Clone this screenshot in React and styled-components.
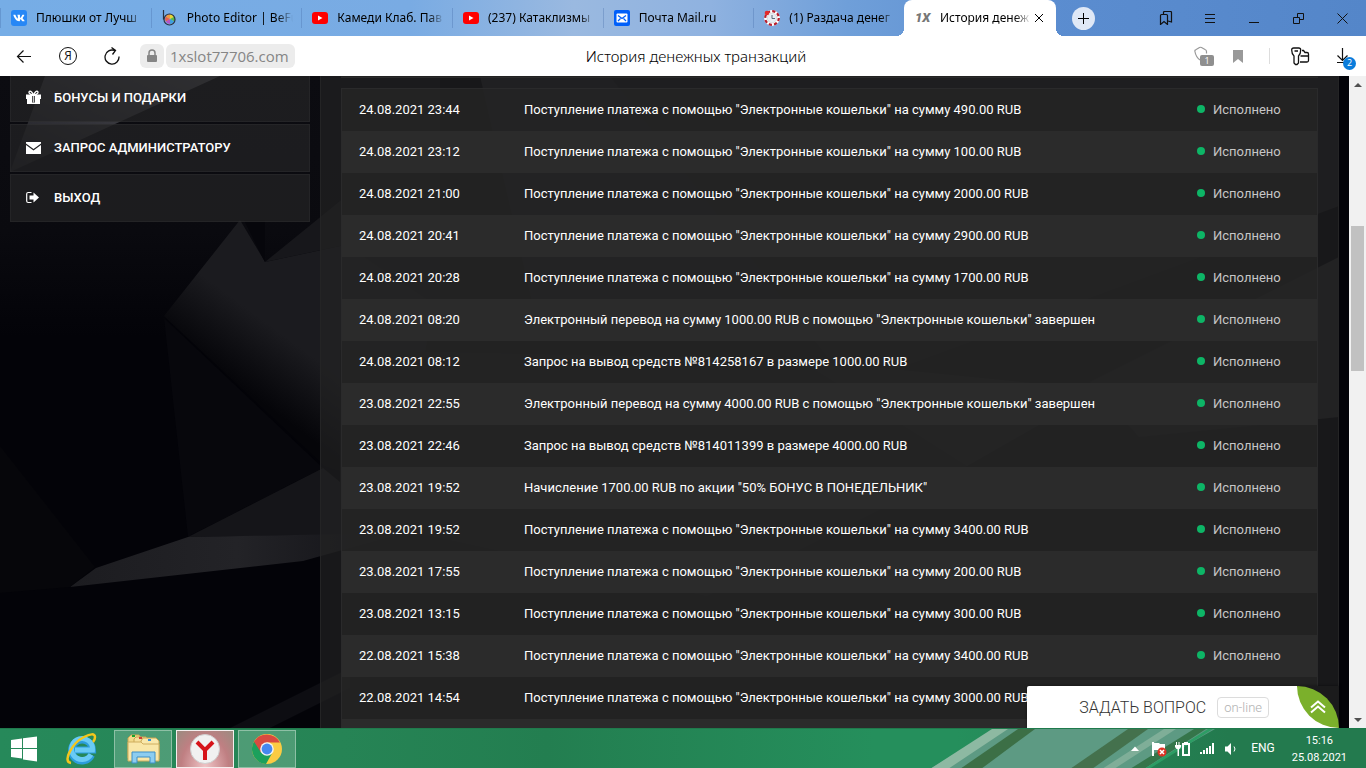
import React from "react";
import styled, { createGlobalStyle } from "styled-components";
import { FaVk } from "react-icons/fa";

const GlobalStyle = createGlobalStyle`
	* {
		box-sizing: border-box;
	}
	body {
		margin: 0;
		font-family: Roboto, "Liberation Sans", sans-serif;
		font-size: 13px;
		overflow: hidden;
	}
	button {
		border: none;
		background: none;
		padding: 0;
		font-family: inherit;
		color: inherit;
	}
	svg {
		display: block;
		flex: none;
	}
`;

const Screen = styled.div`
	display: flex;
	flex-direction: column;
	height: 100vh;
	background-color: #030308;
`;

/* browser tabs */

const TabBar = styled.header`
	display: flex;
	flex: none;
	height: 36px;
	background: linear-gradient(
		90deg,
		#76ade6 0%,
		#79abe3 30%,
		#9ab9e0 42%,
		#8fb2e0 52%,
		#6f9fd9 62%,
		#5b8dd0 76%,
		#5486c9 100%
	);
`;

const TabList = styled.nav`
	display: flex;
	flex: 0 1 904px;
	min-width: 0;
`;

const Tab = styled.button`
	display: flex;
	align-items: center;
	flex: 1 1 0;
	min-width: 0;
	gap: 9px;
	padding: 0 8px 0 11px;
	color: #000;
	background: linear-gradient(rgba(70, 110, 170, 0.35), rgba(70, 110, 170, 0.35)) 0 50% / 1px 20px no-repeat;
`;

const ActiveTab = styled.div`
	position: relative;
	display: flex;
	align-items: center;
	flex: none;
	width: 152px;
	gap: 9px;
	padding: 0 12px 0 11px;
	color: #000;
	background-color: #fff;
	border-radius: 8px 8px 0 0;
	&::before,
	&::after {
		content: "";
		position: absolute;
		bottom: 0;
		width: 8px;
		height: 8px;
	}
	&::before {
		right: 100%;
		background: radial-gradient(circle at 0 0, transparent 8px, #fff 8px);
	}
	&::after {
		left: 100%;
		background: radial-gradient(circle at 100% 0, transparent 8px, #fff 8px);
	}
	button {
		margin-left: -6px;
	}
`;

const TabText = styled.span`
	flex: 1;
	min-width: 0;
	overflow: hidden;
	white-space: nowrap;
	text-align: left;
	font: 12px/20px "Noto Sans", "Open Sans", sans-serif;
	mask-image: linear-gradient(90deg, #000 calc(100% - 16px), transparent);
`;

const VkLogo = styled.span`
	display: flex;
	flex: none;
	align-items: center;
	justify-content: center;
	width: 16px;
	height: 16px;
	border-radius: 3px;
	background-color: #2787f5;
	color: #fff;
	font-size: 12px;
`;

const SlotLogo = styled.span`
	flex: none;
	width: 16px;
	color: #777;
	font: italic 900 13px/16px Roboto, sans-serif;
`;

const NewTab = styled.button`
	display: flex;
	align-items: center;
	justify-content: center;
	align-self: center;
	width: 23px;
	height: 23px;
	margin-left: 16px;
	border-radius: 50%;
	background-color: #dfe8f6;
`;

const WindowButtons = styled.div`
	display: flex;
	margin-left: auto;
	padding-right: 2px;
`;

const IconButton = styled.button`
	position: relative;
	display: flex;
	align-items: center;
	justify-content: center;
	width: ${props => (props.$narrow ? "34px" : "44px")};
	height: 100%;
	color: ${props => props.$color || "#111"};
`;

/* address bar */

const AddressBar = styled.div`
	background-color: #fff;
	display: grid;
	grid-template-columns: 1fr auto 1fr;
	align-items: center;
	flex: none;
	height: 40px;
`;

const BarSide = styled.div`
	display: flex;
	align-items: center;
	justify-content: ${props => (props.$end ? "flex-end" : "flex-start")};
	height: 40px;
	padding-left: 2px;
`;

const YandexRing = styled.span`
	width: 18px;
	height: 18px;
	border: 1px solid #111;
	border-radius: 50%;
	text-align: center;
	font: 12px/16px "Open Sans", sans-serif;
`;

const Lock = styled.span`
	display: flex;
	align-items: center;
	justify-content: center;
	width: 24px;
	height: 24px;
	margin: 0 2px 0 6px;
	border-radius: 6px;
	background-color: #ececec;
`;

const Address = styled.input`
	width: 129px;
	height: 24px;
	padding: 0 4px;
	border: none;
	border-radius: 6px;
	background-color: #ececec;
	color: #858585;
	font: 15px/24px "Open Sans", "Noto Sans", sans-serif;
`;

const PageTitle = styled.h1`
	margin: 0 0 0 26px;
	color: #000;
	font: 300 15px/24px "Noto Sans", "Open Sans", sans-serif;
`;

const Divider = styled.span`
	width: 1px;
	height: 16px;
	margin: 0 8px 0 14px;
	background-color: #ddd;
`;

const Counter = styled.span`
	position: absolute;
	left: ${props => (props.$round ? "21px" : "13px")};
	top: ${props => (props.$round ? "21px" : "19px")};
	width: ${props => (props.$round ? "13px" : "14px")};
	height: ${props => (props.$round ? "13px" : "11px")};
	border-radius: ${props => (props.$round ? "50%" : "2px")};
	background-color: ${props => (props.$round ? "#0a7cdb" : "#8f8f8f")};
	color: #fff;
	text-align: center;
	font: 9px/12px "Open Sans", sans-serif;
`;

/* page */

const Viewport = styled.div`
	display: flex;
	flex: 1;
	min-height: 0;
	overflow: hidden;
`;

const Page = styled.div`
	position: relative;
	display: flex;
	flex: 1;
	min-width: 0;
	gap: 10px;
	padding: 0 10px;
	overflow: hidden;
`;

const Backdrop = styled.svg`
	position: absolute;
	inset: 0;
	width: 100%;
	height: 100%;
`;

const Sidebar = styled.nav`
	position: relative;
	flex: 0 0 300px;
	display: flex;
	flex-direction: column;
	gap: 2px;
	margin-top: -2px;
`;

const SidebarLink = styled.a`
	display: flex;
	align-items: center;
	gap: 13px;
	height: 48px;
	padding: 0 15px 2px;
	border: 1px solid rgba(255, 255, 255, 0.04);
	background-color: rgba(35, 35, 36, 0.75);
	color: #fff;
	font-size: 13px;
	font-weight: 500;
	text-decoration: none;
	text-transform: uppercase;
`;

const Panel = styled.main`
	position: relative;
	flex: 1;
	min-width: 0;
	padding: 0 20px;
	border: solid #242425;
	border-width: 0 1px;
	background-color: rgba(36, 36, 36, 0.68);
`;

const FilterEnd = styled.div`
	height: 2px;
	margin-bottom: 10px;
	border-bottom: 1px solid #2a2a2a;
	background-color: #222;
`;

const History = styled.table`
	width: 100%;
	table-layout: fixed;
	border-spacing: 0;
	border: 1px solid #2a2a2b;
`;

const Row = styled.tr`
	height: 42px;
	background-color: rgba(37, 37, 37, 0.85);
	&:nth-child(even) {
		background-color: #2b2b2b;
	}
`;

const Cell = styled.td`
	width: ${props => props.$width || "auto"};
	padding: 0 17px 2px;
	color: ${props => (props.$muted ? "#c6c6c6" : "#fff")};
	white-space: nowrap;
`;

const Status = styled.span`
	display: flex;
	align-items: center;
	gap: 8px;
	&::before {
		content: "";
		width: 8px;
		height: 8px;
		border-radius: 50%;
		background-color: #0db566;
	}
`;

const ScrollBar = styled.div`
	display: flex;
	flex-direction: column;
	flex: 0 0 17px;
	background-color: #f1f1f1;
`;

const ScrollGap = styled.div`
	flex: ${props => props.$share} 1 0;
`;

const ScrollThumb = styled.div`
	flex: 145 1 0;
	margin: 0 2px;
	background-color: #c1c1c1;
`;

const ScrollArrow = styled.button`
	display: flex;
	align-items: center;
	justify-content: center;
	height: 17px;
`;

const Chat = styled.aside`
	position: absolute;
	right: 10px;
	bottom: 0;
	display: flex;
	align-items: center;
	gap: 28px;
	height: 42px;
	padding-left: 52px;
	background-color: #fff;
	border-top-left-radius: 2px;
	box-shadow: 0 0 3px rgba(0, 0, 0, 0.5);
`;

const ChatButton = styled.button`
	display: flex;
	align-items: center;
	gap: 11px;
	color: #333;
	font-size: 16px;
	font-weight: 300;
	text-transform: uppercase;
	white-space: nowrap;
`;

const Online = styled.span`
	height: 21px;
	padding: 0 6px;
	border: 1px solid #dcdcdc;
	border-radius: 4px;
	color: #b0b0b0;
	font-size: 13px;
	line-height: 19px;
	text-transform: none;
`;

const LeafCorner = styled.div`
	background: linear-gradient(to top right, #fff 50%, #1b1b1c 50%);
`;

const ChatLeaf = styled.button`
	display: flex;
	align-items: center;
	justify-content: center;
	width: 42px;
	height: 42px;
	border-radius: 0 100% 0 100%;
	background-color: #7bb02b;
`;

/* taskbar */

const Taskbar = styled.footer`
	position: relative;
	display: flex;
	align-items: center;
	justify-content: space-between;
	flex: none;
	height: 40px;
	border-top: 1px solid #1f7a4c;
	background: linear-gradient(90deg, #26895a, #268455 25%, #237e50 40%, #258f5c 64%, #258f5c 70%, #237a4e 90%);
	overflow: hidden;
`;

const TaskbarArt = styled.svg`
	position: absolute;
	right: 0;
	top: 0;
`;

const Apps = styled.div`
	position: relative;
	display: flex;
	align-items: center;
	gap: 4px;
`;

const AppButton = styled.button`
	display: flex;
	align-items: center;
	justify-content: center;
	width: ${props => (props.$start ? "48px" : "58px")};
	height: 38px;
	border: 1px solid ${props => (props.$active ? "#f5eeee" : props.$open ? "#8dc0a5" : "transparent")};
	background: ${props => {
		if (props.$active) return "radial-gradient(ellipse at 50% 100%, #f0c4c6, #bf7f82 60%, #9a8c80)";
		return props.$open ? "rgba(255, 255, 255, 0.18)" : "none";
	}};
`;

const Tray = styled.div`
	position: relative;
	display: flex;
	align-items: center;
	color: #fff;
`;

const TrayButton = styled.button`
	display: flex;
	align-items: center;
	justify-content: center;
	width: 24px;
	height: 24px;
`;

const Language = styled.span`
	margin: 0 17px 0 8px;
	font: 12px/17px Roboto, sans-serif;
`;

const Clock = styled.time`
	padding-right: 19px;
	text-align: center;
	font: 11px/17px Roboto, sans-serif;
`;

const deposit = sum => `Поступление платежа с помощью "Электронные кошельки" на сумму ${sum} RUB`;
const transfer = sum => `Электронный перевод на сумму ${sum} RUB с помощью "Электронные кошельки" завершен`;
const withdrawal = (id, sum) => `Запрос на вывод средств №${id} в размере ${sum} RUB`;

const transactions = [
	{ date: "24.08.2021 23:44", text: deposit("490.00") },
	{ date: "24.08.2021 23:12", text: deposit("100.00") },
	{ date: "24.08.2021 21:00", text: deposit("2000.00") },
	{ date: "24.08.2021 20:41", text: deposit("2900.00") },
	{ date: "24.08.2021 20:28", text: deposit("1700.00") },
	{ date: "24.08.2021 08:20", text: transfer("1000.00") },
	{ date: "24.08.2021 08:12", text: withdrawal("814258167", "1000.00") },
	{ date: "23.08.2021 22:55", text: transfer("4000.00") },
	{ date: "23.08.2021 22:46", text: withdrawal("814011399", "4000.00") },
	{ date: "23.08.2021 19:52", text: 'Начисление 1700.00 RUB по акции "50% БОНУС В ПОНЕДЕЛЬНИК"' },
	{ date: "23.08.2021 19:52", text: deposit("3400.00") },
	{ date: "23.08.2021 17:55", text: deposit("200.00") },
	{ date: "23.08.2021 13:15", text: deposit("300.00") },
	{ date: "22.08.2021 15:38", text: deposit("3400.00") },
	{ date: "22.08.2021 14:54", text: deposit("3000.00") }
];

const Stroke = ({ size = 16, width = 1, children }) => (
	<svg width={size} height={size} viewBox={`0 0 ${size} ${size}`} fill='none' stroke='currentColor' strokeWidth={width}>
		{children}
	</svg>
);

const BefunkyLogo = () => (
	<svg width='16' height='16' viewBox='0 0 16 16'>
		<path d='M12.300 6.500a5 5 0 0 1 0 5L8 9z' fill='#58b947' />
		<path d='M12.300 11.500A5 5 0 0 1 8 14V9z' fill='#3f9fdc' />
		<path d='M8 14a5 5 0 0 1-4.300-2.500L8 9z' fill='#b454c8' />
		<path d='M3.700 11.500a5 5 0 0 1 0-5L8 9z' fill='#e8604c' />
		<path d='M3.700 6.500A5 5 0 0 1 8 4v5z' fill='#f39a3c' />
		<path d='M8 4a5 5 0 0 1 4.300 2.500L8 9z' fill='#e6d635' />
		<circle cx='7.500' cy='9.500' r='5.500' fill='none' stroke='#2b3140' strokeWidth='1.200' />
		<path d='M1.500 0v9.500' stroke='#2b3140' strokeWidth='1.200' />
	</svg>
);

const YoutubeLogo = () => (
	<svg width='16' height='16' viewBox='0 0 16 16'>
		<rect y='2' width='16' height='12' rx='3' fill='#f00' />
		<path d='M6 5.500v5L10.500 8z' fill='#fff' />
	</svg>
);

const MailLogo = () => (
	<svg width='16' height='16' viewBox='0 0 16 16'>
		<rect width='16' height='16' rx='2' fill='#005ff9' />
		<rect x='2.500' y='3.500' width='11' height='9' rx='1' fill='#fff' />
		<path d='M4 5.500l4 3 4-3M4 11l2.500-2.500M12 11L9.500 8.500' fill='none' stroke='#005ff9' strokeWidth='1.200' />
	</svg>
);

const ChipLogo = () => (
	<svg width='16' height='16' viewBox='0 0 16 16'>
		<circle cx='8' cy='8' r='6.800' fill='#fff' stroke='#fff' strokeWidth='2.200' />
		<circle cx='8' cy='8' r='6.800' fill='none' stroke='#b8202f' strokeWidth='2.200' strokeDasharray='3.200 2.140' />
		<circle cx='8' cy='8' r='4.800' fill='#e8edf3' stroke='#ccc' strokeWidth='.6' />
		<path d='M8 5v3.500h3' fill='none' stroke='#5b6b7a' />
		<circle cx='3' cy='3' r='2.300' fill='#e22a2a' />
	</svg>
);

const Gift = () => (
	<svg width='15' height='15' viewBox='0 0 15 15'>
		<path d='M7.500 5C6 2 4.500.8 3.500 1.300S2.500 4.500 7.500 5C9 2 10.500.8 11.500 1.300S12.500 4.500 7.500 5z' fill='none' stroke='#fff' strokeWidth='1.300' />
		<path d='M0 4.500h6V9H0zM9 4.500h6V9H9zM1 9h5v5H1zM9 9h5v5H9zM6 12.500h3V14H6zM6 4.500h3V6H6z' fill='#fff' />
		<path d='M6.700 6h1.600v6.500H6.700z' fill='#ccc' />
	</svg>
);

const Envelope = () => (
	<svg width='15' height='15' viewBox='0 0 15 15'>
		<path d='M0 2h15v1.500L7.500 9 0 3.500zM0 5l7.500 5.500L15 5v9H0z' fill='#fff' />
	</svg>
);

const SignOut = () => (
	<svg width='15' height='15' viewBox='0 0 15 15'>
		<path d='M5.500 2.500H2.200Q.7 2.500.7 4v7q0 1.500 1.500 1.500h3.300' fill='none' stroke='#fff' strokeWidth='1.200' />
		<path d='M7.500 2.500v3H3.500v4h4v3l5.500-5z' fill='#fff' />
	</svg>
);

const Shards = () => (
	<Backdrop viewBox='0 76 1349 652' preserveAspectRatio='xMinYMin slice' aria-hidden='true'>
		<defs>
			<linearGradient id='beam' x1='1' y1='0' x2='0' y2='1'>
				<stop offset='0' stopColor='#54545a' />
				<stop offset='1' stopColor='#1a1a20' />
			</linearGradient>
			<linearGradient id='shade' x1='0' y1='0' x2='0' y2='1'>
				<stop offset='0' stopColor='#0c0c11' />
				<stop offset='.6' stopColor='#0a0a0f' />
				<stop offset='1' stopColor='#030308' />
			</linearGradient>
			<linearGradient id='facet' gradientUnits='userSpaceOnUse' x1='290' y1='340' x2='250' y2='394'>
				<stop offset='0' stopColor='#1b1b1f' />
				<stop offset='1' stopColor='#050509' />
			</linearGradient>
			<linearGradient id='blade' x1='0' x2='1'>
				<stop offset='0' stopColor='#1c1c20' />
				<stop offset='.5' stopColor='#232327' />
				<stop offset='1' stopColor='#111116' />
			</linearGradient>
		</defs>
		<path d='M0 76h1349v652H0z' fill='#030308' />
		<path d='M0 76h440v260H0z' fill='url(#shade)' />
		<path d='M45 76h175L10 172z' fill='url(#beam)' />
		<path d='M240 220l25 42 80-17 90 60-40 183-70-22-161-150z' fill='url(#facet)' />
		<path d='M244 220h21v42z' fill='#06060b' />
		<path d='M265 262l80-65v48z' fill='#17171b' />
		<path d='M164 318l24 219 135-69z' fill='#07070c' />
		<path d='M188 537l135-69 80 66z' fill='#151519' />
		<path d='M70 587l26-19 92-31 215-4-100 28z' fill='url(#blade)' />
		<path d='M0 446l95 121-25 20L0 593z' fill='#06060a' />
		<path d='M230 728l120-60v20l-80 40z' fill='#0d0d12' />
		<path d='M480 76l60 260 300-20L760 76z' fill='#1a1a1f' />
		<path d='M610 76l240 310 489-180V76z' fill='#15151a' />
		<path d='M340 350l460 10 300 30-133 76-260 130-367-80z' fill='#141418' />
		<path d='M800 360l300 30-133 76z' fill='#242428' />
		<path d='M1090 382l249-125v160l-200 20z' fill='#202024' />
	</Backdrop>
);

const Windows = () => (
	<svg width='28' height='26' viewBox='0 0 28 26' fill='#fff'>
		<path d='M1 4l11-1.500V12H1zM13 2.300L27 .5V12H13zM1 13h11v9.500L1 21zM13 13h14v12.500l-14-2z' />
	</svg>
);

const Explorer = () => (
	<svg width='34' height='32' viewBox='0 0 34 32'>
		<path d='M2 5l3-3h8l2 3v20H2z' fill='#f2d98a' stroke='#c9a552' />
		<path d='M8 6l2-2h10l2 2v20H8z' fill='#f6e09a' stroke='#c9a552' />
		<path d='M15 8l2-3h13l3 3v18H15z' fill='#f9e8ab' stroke='#c9a552' />
		<path d='M6 3h3' stroke='#18a32b' strokeWidth='2' />
		<path d='M13 5h3' stroke='#cf3e35' strokeWidth='2' />
		<path d='M22 7h3' stroke='#2f8ddb' strokeWidth='2' />
		<path d='M2 9h13l2 2h16v17H2z' fill='#f9e7a8' stroke='#cfae5f' />
		<path d='M6 30V19h23v11h-5v-6H11v6z' fill='#8ccdf0' stroke='#3c8fc7' />
	</svg>
);

const InternetExplorer = () => (
	<svg width='34' height='34' viewBox='0 0 34 34' fill='none'>
		<path d='M27.500 23a10.500 10.500 0 1 1 1-5H11' stroke='#2b9ddc' strokeWidth='7' />
		<path d='M27 22.500a10.500 10.500 0 1 1 1.500-4.500H11' stroke='#69cbf5' strokeWidth='5' />
		<path d='M7 31C-2 30 8 11 20 5c6-3 11-4 11 0 0 2-1 4-2 5' stroke='#f3c61c' strokeWidth='2.500' />
	</svg>
);

const YandexLogo = () => (
	<svg width='30' height='30' viewBox='0 0 30 30'>
		<circle cx='15' cy='15' r='14.500' fill='#f1f1f1' stroke='#cfcfcf' />
		<path d='M7 8l8 8v10M23 8l-8 8' fill='none' stroke='#d6141a' strokeWidth='4' />
	</svg>
);

const ChromeLogo = () => (
	<svg width='30' height='30' viewBox='0 0 30 30'>
		<circle cx='15' cy='15' r='15' fill='#fbcb43' />
		<path d='M2 7.500A15 15 0 0 0 14 30l6.500-11.500L15 15z' fill='#1ca05c' />
		<path d='M2 7.500L9 18.500l6-10h13A15 15 0 0 0 2 7.500z' fill='#d94a40' />
		<circle cx='15' cy='15' r='6.800' fill='#f4f4f4' />
		<circle cx='15' cy='15' r='5.400' fill='#4688f1' />
	</svg>
);

const App = () => (
	<Screen>
		<GlobalStyle />
		<TabBar>
			<TabList aria-label='Tabs'>
				<Tab>
					<VkLogo><FaVk /></VkLogo>
					<TabText>Плюшки от Лучш</TabText>
				</Tab>
				<Tab>
					<BefunkyLogo />
					<TabText>Photo Editor | BeFu</TabText>
				</Tab>
				<Tab>
					<YoutubeLogo />
					<TabText>Камеди Клаб. Пав</TabText>
				</Tab>
				<Tab>
					<YoutubeLogo />
					<TabText>(237) Катаклизмы</TabText>
				</Tab>
				<Tab>
					<MailLogo />
					<TabText>Почта Mail.ru</TabText>
				</Tab>
				<Tab>
					<ChipLogo />
					<TabText>(1) Раздача денег</TabText>
				</Tab>
			</TabList>
			<ActiveTab>
				<SlotLogo>1X</SlotLogo>
				<TabText>История денеж</TabText>
				<button aria-label='Close tab'>
					<Stroke size={10}><path d='M1 1l8 8M9 1L1 9' /></Stroke>
				</button>
			</ActiveTab>
			<NewTab aria-label='New tab'>
				<Stroke size={11}><path d='M5.500 0v11M0 5.500h11' /></Stroke>
			</NewTab>
			<WindowButtons>
				<IconButton aria-label='Bookmarks'>
					<Stroke size={14} width={1.2}>
						<path d='M1.500 4.500q0-1 1-1h5q1 0 1 1v9L5 10.500l-3.500 3z' />
						<path d='M4.500 3.500v-2q0-1 1-1h6q1 0 1 1v9.500L9 10' />
					</Stroke>
				</IconButton>
				<IconButton aria-label='Menu'>
					<Stroke size={11}><path d='M0 1.500h10M0 5.500h10M0 9.500h10' /></Stroke>
				</IconButton>
				<IconButton aria-label='Minimize'>
					<Stroke size={11}><path d='M0 9.500h10' /></Stroke>
				</IconButton>
				<IconButton aria-label='Restore'>
					<Stroke size={11}><path d='M.5 4.500h6v6h-6zM4.500 4v-3.500h6v6h-4' /></Stroke>
				</IconButton>
				<IconButton aria-label='Close'>
					<Stroke size={11}><path d='M.5.5l10 10M10.500.5l-10 10' /></Stroke>
				</IconButton>
			</WindowButtons>
		</TabBar>

		<AddressBar>
			<BarSide>
				<IconButton aria-label='Back'>
					<Stroke width={1.2}><path d='M15 8.500H1.500M7.500 2.500l-6 6 6 6' /></Stroke>
				</IconButton>
				<IconButton aria-label='Yandex'>
					<YandexRing>Я</YandexRing>
				</IconButton>
				<IconButton aria-label='Reload'>
					<Stroke size={18} width={1.3}><path d='M16 9.500a7 7 0 1 1-4.500-6M8.500.5l4 3-3 4' /></Stroke>
				</IconButton>
				<Lock>
					<svg width='12' height='14' viewBox='0 0 12 14'>
						<rect x='1' y='6' width='10' height='7' rx='1' fill='#858585' />
						<path d='M3 6V4a3 3 0 0 1 6 0v2' fill='none' stroke='#858585' strokeWidth='1.500' />
					</svg>
				</Lock>
				<Address aria-label='Address' defaultValue='1xslot77706.com' />
			</BarSide>
			<PageTitle>История денежных транзакций</PageTitle>
			<BarSide $end>
				<IconButton $narrow $color='#999' aria-label='Protect'>
					<Stroke size={20} width={1.2}>
						<path d='M6 14C3 12 1.500 9 .8 5q0-1 1-1.200L5.500 1.500q1-.5 2 0L11 3.500q1.500.5 1.500 2v2' />
					</Stroke>
					<Counter>1</Counter>
				</IconButton>
				<IconButton $narrow $color='#999' aria-label='Add bookmark'>
					<svg width='10' height='13' viewBox='0 0 10 13'>
						<path d='M0 0h10v13L5 9l-5 4z' fill='currentColor' />
					</svg>
				</IconButton>
				<Divider />
				<IconButton aria-label='Passwords'>
					<Stroke size={19} width={1.3}>
						<path d='M.7 3q0-2 2-2h5q2 0 2 2 0 4-2.200 6v7L6 17.500H4.500L3 16V9Q.7 7 .7 3zM3.500 4h3.500' />
						<path d='M11 3.500h1.500l1.500 2h2q1.500 0 1.500 1.500v6.500q0 1.500-1.500 1.500H9M9.500 9h8' />
					</Stroke>
				</IconButton>
				<IconButton aria-label='Downloads'>
					<Stroke size={16} width={1.2}><path d='M1 14.500h8M6.500 0v12M1.500 7.500l5 5 5-5' /></Stroke>
					<Counter $round>2</Counter>
				</IconButton>
			</BarSide>
		</AddressBar>

		<Viewport>
			<Page>
				<Shards />
				<Sidebar>
					<SidebarLink href='#bonuses'><Gift />Бонусы и подарки</SidebarLink>
					<SidebarLink href='#request'><Envelope />Запрос администратору</SidebarLink>
					<SidebarLink href='#exit'><SignOut />Выход</SidebarLink>
				</Sidebar>
				<Panel>
					<FilterEnd />
					<History>
						<tbody>
							{transactions.map((item, i) => (
								<Row key={i}>
									<Cell $width='165px'>{item.date}</Cell>
									<Cell>{item.text}</Cell>
									<Cell $width='137px' $muted>
										<Status>Исполнено</Status>
									</Cell>
								</Row>
							))}
							<Row>
								<Cell colSpan={3} />
							</Row>
						</tbody>
					</History>
				</Panel>
				<Chat>
					<ChatButton>
						Задать вопрос
						<Online>on-line</Online>
					</ChatButton>
					<LeafCorner>
						<ChatLeaf aria-label='Expand'>
							<svg width='16' height='14' viewBox='0 0 16 14' fill='none' stroke='#fff' strokeWidth='2'>
								<path d='M1 7.500l7-6 7 6M1 12.500l7-6 7 6' />
							</svg>
						</ChatLeaf>
					</LeafCorner>
				</Chat>
			</Page>
			<ScrollBar>
				<ScrollArrow aria-label='Scroll up'>
					<svg width='8' height='4' viewBox='0 0 8 4'><path d='M0 4l4-4 4 4z' fill='#505050' /></svg>
				</ScrollArrow>
				<ScrollGap $share={133} />
				<ScrollThumb />
				<ScrollGap $share={340} />
				<ScrollArrow aria-label='Scroll down'>
					<svg width='8' height='4' viewBox='0 0 8 4'><path d='M0 0l4 4 4-4z' fill='#505050' /></svg>
				</ScrollArrow>
			</ScrollBar>
		</Viewport>

		<Taskbar>
			<TaskbarArt width='486' height='40' viewBox='0 0 486 40' aria-hidden='true'>
				<path d='M50 40L115 0h220l-70 40z' fill='#5d9a83' />
				<path d='M50 40L112 0h16L68 40z' fill='#8db9a2' />
				<path d='M80 40L138 0h17l-54 40z' fill='#3c6f46' />
				<path d='M190 40l58-40h20l-56 40z' fill='#44714d' />
				<path d='M222 40l62-40h12l-62 40z' fill='#7fae98' />
				<path d='M250 40l64-40h12l-62 40z' fill='#35754a' />
				<path d='M264 40l64-40h5l-64 40z' fill='#2c9d64' />
			</TaskbarArt>
			<Apps>
				<AppButton $start aria-label='Start'><Windows /></AppButton>
				<AppButton aria-label='Internet Explorer'><InternetExplorer /></AppButton>
				<AppButton $open aria-label='Explorer'><Explorer /></AppButton>
				<AppButton $open $active aria-label='Yandex Browser'><YandexLogo /></AppButton>
				<AppButton $open aria-label='Chrome'><ChromeLogo /></AppButton>
			</Apps>
			<Tray>
				<TrayButton aria-label='Hidden icons'>
					<svg width='8' height='5' viewBox='0 0 8 5'><path d='M0 5l4-4.500L8 5z' fill='#fff' /></svg>
				</TrayButton>
				<TrayButton aria-label='Action center'>
					<svg width='16' height='16' viewBox='0 0 16 16'>
						<path d='M1 1h2v14H1zM3 2h5l1 1h5v7H9L8 9H3z' fill='#fff' />
						<circle cx='11' cy='11' r='4.500' fill='#dc3325' />
						<path d='M9 9l4 4M13 9l-4 4' stroke='#fff' strokeWidth='1.500' />
					</svg>
				</TrayButton>
				<TrayButton aria-label='Battery'>
					<svg width='16' height='16' viewBox='0 0 16 16' fill='#fff'>
						<path d='M7 2h2V1h4v1h2v13H7zm2 2v9h4V4z' fillRule='evenodd' />
						<path d='M1 1h1v3h1.500V1h1v3H6v2L4.500 8H4v7H2.500V8H1.500L0 6V4h1z' />
					</svg>
				</TrayButton>
				<TrayButton aria-label='Network'>
					<svg width='16' height='14' viewBox='0 0 16 14' fill='#fff'>
						<path d='M1 10h2v2H1zM4 8h2v4H4zM7 6h2v6H7zM10 4h2v8h-2zM13 1h2v11h-2z' />
					</svg>
				</TrayButton>
				<TrayButton aria-label='Volume'>
					<svg width='14' height='14' viewBox='0 0 14 14'>
						<path d='M1 4.500h2.500L7 1v12L3.500 9.500H1z' fill='#fff' />
						<path d='M10 4.500q2 2.500 0 5' fill='none' stroke='#fff' />
					</svg>
				</TrayButton>
				<Language>ENG</Language>
				<Clock>
					15:16
					<br />
					25.08.2021
				</Clock>
			</Tray>
		</Taskbar>
	</Screen>
);

export default App;
